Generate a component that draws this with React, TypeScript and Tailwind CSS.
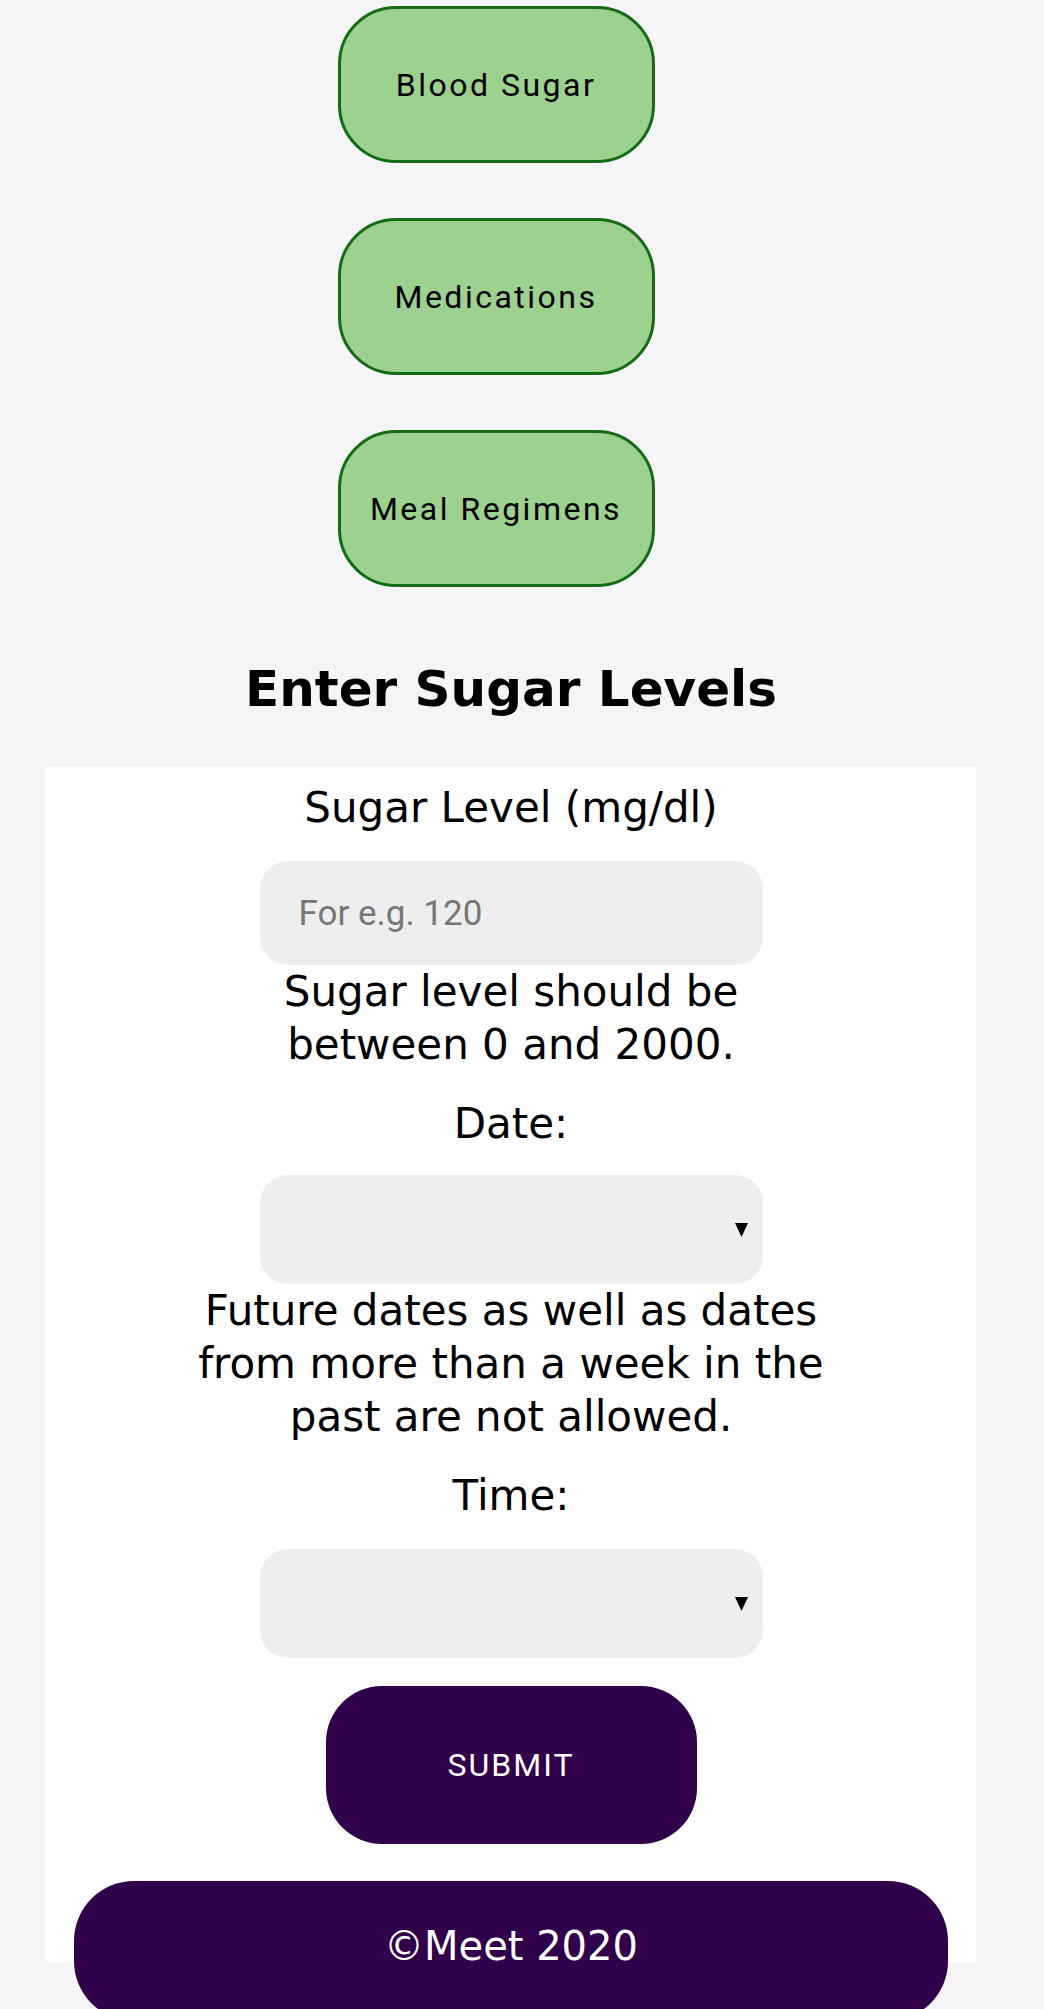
import { useState } from 'react';

const navItems = ['Blood Sugar', 'Medications', 'Meal Regimens'];

const labelFont = { fontFamily: '"DejaVu Sans", "Open Sans", sans-serif' };
const roboto = { fontFamily: 'Roboto, "Liberation Sans", sans-serif' };

const Caret = () => (
  <svg width="13" height="14" viewBox="0 0 13 14" className="shrink-0">
    <path d="M0 0 L13 0 L6.5 14 Z" fill="#000" />
  </svg>
);

const PickerBox = ({ value, onChange }: { value: string; onChange: (v: string) => void }) => (
  <div className="flex h-[109px] w-[503px] items-center rounded-[28px] bg-[#eeeeee] pr-[15px]">
    <select
      value={value}
      onChange={(e) => onChange(e.target.value)}
      className="h-full flex-1 appearance-none bg-transparent px-8 text-[32px] outline-none"
      style={roboto}
    >
      <option value=""></option>
    </select>
    <Caret />
  </div>
);

const App = () => {
  const [sugar, setSugar] = useState('');
  const [date, setDate] = useState('');
  const [time, setTime] = useState('');

  return (
    <div className="min-h-screen w-full bg-[#f5f5f7] text-black">
      <div className="w-[1022px]">
        {/* Nav buttons */}
        <div className="flex flex-col items-center gap-[55px] pr-[30px] pt-[6px]">
          {navItems.map((item) => (
            <button
              key={item}
              className="flex h-[157px] w-[317px] items-center justify-center rounded-[58px] border-[3px] border-[#146c14] bg-[#9dd18f] text-[32px] tracking-[2.5px] text-black"
              style={roboto}
            >
              {item}
            </button>
          ))}
        </div>

        {/* Heading */}
        <h1
          className="mt-[72px] mb-[48px] text-center text-[50px] font-bold leading-[60px]"
          style={labelFont}
        >
          Enter Sugar Levels
        </h1>

        {/* Form card */}
        <form
          className="mx-[46px] flex flex-col items-center bg-white pt-[14px] pb-[118px] text-[42px] leading-[53px]"
          style={labelFont}
          onSubmit={(e) => e.preventDefault()}
        >
          <label className="text-center">Sugar Level (mg/dl)</label>
          <input
            value={sugar}
            onChange={(e) => setSugar(e.target.value)}
            placeholder="For e.g. 120"
            className="mt-[27px] h-[104px] w-[503px] rounded-[28px] bg-[#eeeeee] px-[39px] text-[35px] text-black outline-none placeholder:text-[#777777]"
            style={roboto}
          />
          <p className="text-center">
            Sugar level should be
            <br />
            between 0 and 2000.
          </p>

          <label className="mt-[26px] text-center">Date:</label>
          <div className="mt-[25px]">
            <PickerBox value={date} onChange={setDate} />
          </div>
          <p className="text-center">
            Future dates as well as dates
            <br />
            from more than a week in the
            <br />
            past are not allowed.
          </p>

          <label className="mt-[26px] text-center">Time:</label>
          <div className="mt-[27px]">
            <PickerBox value={time} onChange={setTime} />
          </div>

          <button
            type="submit"
            className="mt-[28px] h-[158px] w-[371px] rounded-[56px] bg-[#31004a] text-[32px] tracking-[2px] text-white"
            style={roboto}
          >
            SUBMIT
          </button>
        </form>

        {/* Footer */}
        <footer
          className="relative mx-[74px] -mt-[81px] flex h-[140px] items-start justify-center rounded-[60px] bg-[#31004a] pt-[40px] text-[40px] leading-[50px] text-white"
          style={labelFont}
        >
          ©Meet 2020
        </footer>
      </div>
    </div>
  );
};

export default App;
